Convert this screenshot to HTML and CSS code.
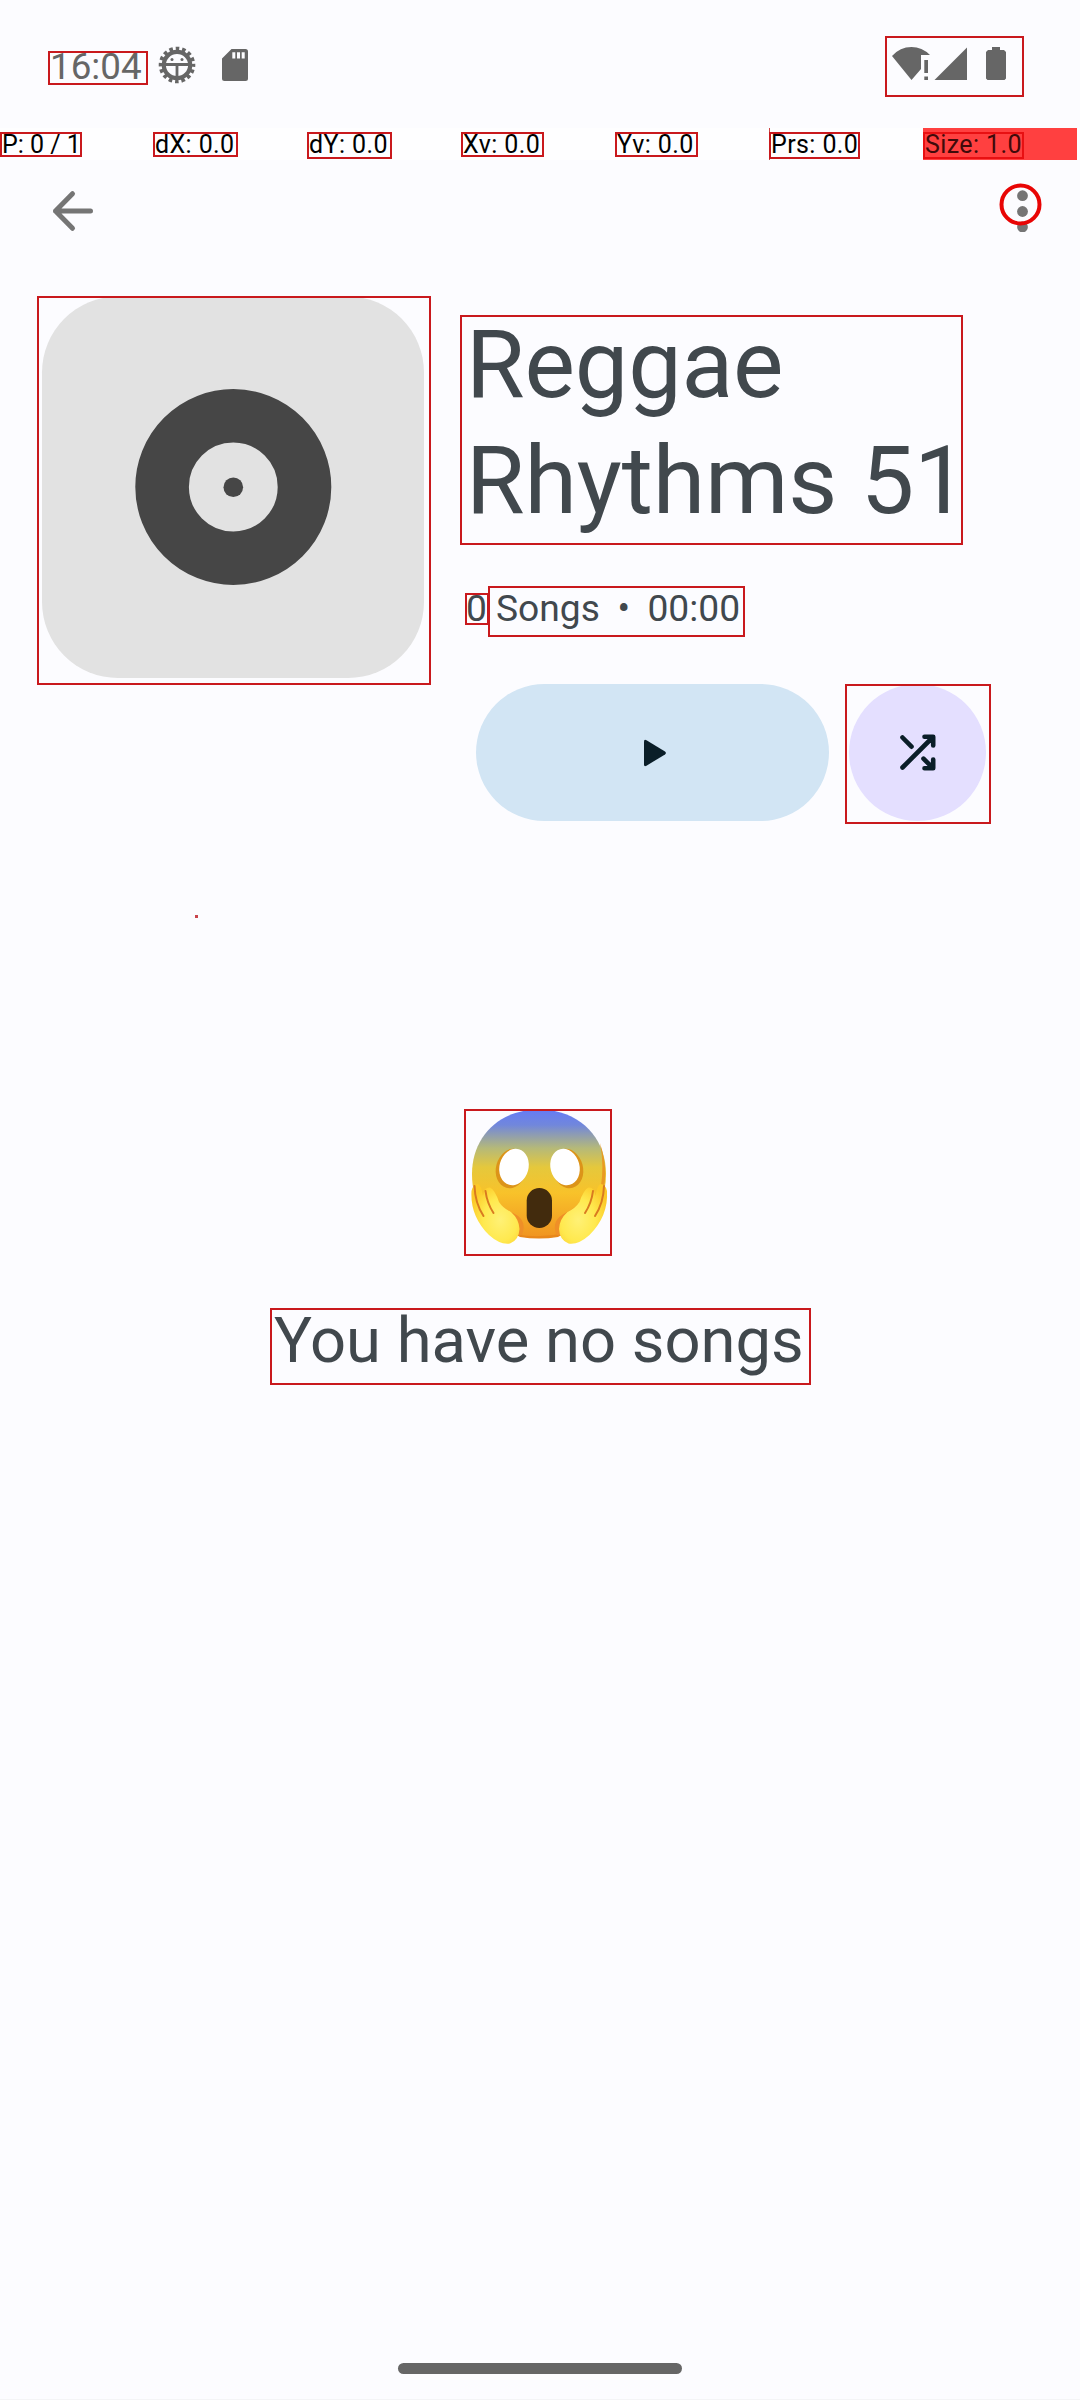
FILE: index.html
```html
<!DOCTYPE html>
<html lang="en">
<head>
<meta charset="utf-8">
<title>Reggae Rhythms 51</title>
<link rel="stylesheet" href="styles.css">
</head>
<body>
<div class="screen">
  <header class="status">
    <div class="mark clock">16:04</div>
    <svg class="gear" width="38" height="38" viewBox="0 0 38 38">
      <circle cx="19" cy="19" r="16" fill="none" stroke="#666" stroke-width="4.600" stroke-dasharray="3.500 2.783" stroke-dashoffset="1.750"/>
      <circle cx="19" cy="19" r="13.200" fill="none" stroke="#666" stroke-width="4.200"/>
      <path d="M5 18.500H33M19 18.500V34" stroke="#666" stroke-width="2.800"/>
      <circle cx="14" cy="13.500" r="1.500" fill="#666"/><circle cx="24" cy="13.500" r="1.500" fill="#666"/>
    </svg>
    <svg class="sd" width="26" height="32" viewBox="0 0 26 32">
      <path fill="#666" fill-rule="evenodd" d="M9.500 0H23.500Q26 0 26 2.500V29.500Q26 32 23.500 32H2.500Q0 32 0 29.500V9.500ZM10.300 3.200V9.600H13.300V3.200ZM15 3.200V9.600H18V3.200ZM19.700 3.200V9.600H22.700V3.200Z"/>
    </svg>
    <div class="mark signals">
      <svg width="135" height="57" viewBox="0 0 135 57">
        <g fill="#666">
          <path d="M5 18Q13 9 24.500 9Q35 9 43 17H34V31L24.500 42Z"/>
          <path d="M37.300 22H41V35H37.300ZM37.300 38.500H41V42H37.300Z"/>
          <path d="M47.500 42 80 9.500V42Z"/>
          <path d="M105 9H113V12H117L119 14V40.500L117.500 42H100.500L99 40.500V14L101 12H105Z"/>
        </g>
      </svg>
    </div>
  </header>
  <div class="pointer">
    <div class="cell first"><span class="mark w-p">P: 0 / 1</span></div>
    <div class="cell"><span class="mark w-dx">dX: 0.0</span></div>
    <div class="cell"><span class="mark w-dy tall">dY: 0.0</span></div>
    <div class="cell"><span class="mark w-v">Xv: 0.0</span></div>
    <div class="cell"><span class="mark w-v">Yv: 0.0</span></div>
    <div class="cell line"><span class="mark w-prs tall">Prs: 0.0</span></div>
    <div class="cell full"><span class="mark w-size tall">Size: 1.0</span></div>
  </div>
  <nav class="toolbar">
    <svg width="42" height="42" viewBox="0 0 42 42"><path d="M39.500 21H4.500M21.500 3.700 4.500 21 21.500 38.300" fill="none" stroke="#757575" stroke-width="5" stroke-linecap="round" stroke-linejoin="round"/></svg>
    <svg width="44" height="54" viewBox="0 0 44 54">
      <g fill="#757575"><circle cx="23.500" cy="17.700" r="5.400"/><circle cx="23.500" cy="33.500" r="5.400"/><circle cx="23.500" cy="49" r="5.400"/></g>
      <circle cx="21.500" cy="26.500" r="19" fill="none" stroke="#e80505" stroke-width="4"/>
    </svg>
  </nav>
  <section class="album">
    <div class="mark cover">
      <svg width="390" height="385" viewBox="39 298 390 385">
        <rect x="42" y="296.500" width="382" height="381.500" rx="76" fill="#e2e2e2"/>
        <circle cx="233.300" cy="487" r="71.200" fill="none" stroke="#464646" stroke-width="53.600"/>
        <circle cx="233.300" cy="487.300" r="9.800" fill="#464646"/>
      </svg>
    </div>
    <div class="info">
      <div class="mark title"><h1>Reggae<br>Rhythms 51</h1></div>
      <div class="meta"><span class="mark count">0</span><span class="mark detail"><span>Songs</span><span>•</span><span>00:00</span></span></div>
      <div class="actions">
        <button class="play" aria-label="Play"><svg width="24" height="28" viewBox="0 0 24 28"><path d="M1 2.500Q1 0 3.500 1.300L22 12.600Q23.800 14 22 15.400L3.500 26.700Q1 28 1 25.500Z" fill="#0a1e28"/></svg></button>
        <button class="mark shuffle" aria-label="Shuffle"><svg width="142" height="136" viewBox="847 686 142 136">
          <ellipse cx="917.500" cy="752.500" rx="68.500" ry="68.500" fill="#e4dfff"/>
          <path d="M902.500 767.500 932 738M902.500 737.500 911.500 746.700M923.500 758.700 932 767.200M924.500 736.800H933.200V745.500M924.500 768.200H933.200V759.500" fill="none" stroke="#0a1e28" stroke-width="4.600" stroke-linecap="round" stroke-linejoin="round"/>
        </svg></button>
      </div>
    </div>
  </section>
  <div class="speck"></div>
  <main class="empty">
    <div class="mark emoji">
      <svg width="144" height="143" viewBox="466 1111 144 143">
        <defs>
          <linearGradient id="face" x1="0" y1="0" x2="0" y2="1"><stop offset="0" stop-color="#657bf5"/><stop offset=".12" stop-color="#7187dc"/><stop offset=".3" stop-color="#b5b979"/><stop offset=".45" stop-color="#e5c83c"/><stop offset=".65" stop-color="#f8c22a"/><stop offset="1" stop-color="#f09321"/></linearGradient>
          <radialGradient id="hand" cx=".6" cy=".6" r=".65"><stop offset="0" stop-color="#fff176"/><stop offset=".55" stop-color="#ffe94f"/><stop offset="1" stop-color="#fcc928"/></radialGradient>
        </defs>
        <path d="M539 1109.500C580 1109.500 606 1138 606 1174C606 1214 580 1238 539 1238C498 1238 472 1214 472 1174C472 1138 498 1109.500 539 1109.500Z" fill="url(#face)"/>
        <path d="M600 1143Q612 1180 597 1205Q606 1172 600 1143Z" fill="#e99a22"/>
        <path d="M515 1234Q539 1239 565 1233L558 1237Q539 1240 520 1237Z" fill="#e8871b"/>
        <ellipse cx="511.500" cy="1168.500" rx="15.500" ry="20" transform="rotate(15 511.500 1168.500)" fill="#dc9419"/>
        <ellipse cx="567.500" cy="1168.500" rx="15.500" ry="20" transform="rotate(-15 567.500 1168.500)" fill="#dc9419"/>
        <ellipse cx="514" cy="1167" rx="14.500" ry="18.500" transform="rotate(15 514 1167)" fill="#fff"/>
        <ellipse cx="565" cy="1167" rx="14.500" ry="18.500" transform="rotate(-15 565 1167)" fill="#fff"/>
        <rect x="526.700" y="1188" width="25.300" height="40" rx="12.600" fill="#422b0d"/>
        <g id="palm">
          <path d="M493 1196Q502 1208 513 1213Q528 1220 522 1235L510 1236Z" fill="#ef8f27"/>
          <path d="M471.500 1191Q473 1184 478 1184Q481 1185 483 1196Q484 1187 490 1187.500Q495 1190 499 1202Q503 1208 511 1212Q519 1219 519.500 1229Q519 1240 510 1243.500Q500 1245 489 1235Q470 1216 471.500 1191Z" fill="url(#hand)"/>
          <path d="M474.500 1186Q475 1203 483.500 1216M485.500 1191Q487 1203 493.500 1213" fill="none" stroke="#d97a20" stroke-width="2" stroke-linecap="round"/>
        </g>
        <use href="#palm" transform="matrix(-1 0 0 1 1078.500 0)"/>
      </svg>
    </div>
    <p class="mark message">You have no songs</p>
  </main>
  <footer class="gesture"><div class="pill"></div></footer>
</div>
</body>
</html>
```
FILE: styles.css
```css
* { box-sizing: border-box; }
body { margin: 0; background: #fcfcff; color: #41484d; font-family: Roboto, sans-serif; }
svg { display: block; flex: none; }
.screen { width: 1080px; height: 2400px; display: flex; flex-direction: column; }
.mark { display: block; flex: none; border: 2px solid #c9191d; white-space: nowrap; }

.status { height: 128px; flex: none; display: flex; align-items: flex-start; padding-left: 48px; }
.clock { width: 100px; height: 34px; margin-top: 51px; font-size: 36.800px; line-height: 28px; color: #666; }
.gear { margin: 46px 0 0 10px; }
.sd { margin: 49px 0 0 26px; }
.signals { width: 139px; height: 61px; margin: 36px 0 0 637px; }

.pointer { height: 32px; flex: none; display: flex; background: #fefeff; color: #000; }
.cell { width: 154px; flex: none; padding-top: 4px; letter-spacing: .4px; }
.first { width: 153px; letter-spacing: 0; }
.cell .mark { height: 25px; font-size: 25px; line-height: 21px; }
.cell .tall { height: 27px; }
.w-p { width: 82px; }
.w-dx, .w-dy { width: 85px; }
.w-v { width: 83px; }
.w-prs { width: 91px; }
.w-size { width: 101px; }
.line { box-shadow: inset 1px 0 #c44; }
.full { background: #ff4040; color: #400a0a; }
.full .mark { border-color: #e81012; }

.toolbar { height: 136px; flex: none; display: flex; justify-content: space-between; align-items: flex-start; padding: 18px 37px 0 51px; }
.toolbar svg:first-child { margin-top: 12px; }

.album { height: 530px; flex: none; display: flex; align-items: flex-start; gap: 29px; padding-left: 37px; }
.cover { width: 394px; height: 389px; }
.cover svg { overflow: hidden; }
.info { display: flex; flex-direction: column; padding-top: 19px; }
.title { width: 503px; height: 230px; padding-left: 4px; }
.title h1 { margin: -10.500px 0 0; font-size: 95.200px; line-height: 116px; font-weight: 400; letter-spacing: -.15px; }
.meta { display: flex; align-items: flex-start; margin: 41px 0 0 5px; font-size: 37.200px; }
.count { width: 24px; height: 32px; margin-top: 7px; line-height: 27px; text-indent: -1px; }
.detail { display: flex; gap: 17.500px; width: 257px; height: 51px; margin-left: -1px; padding-left: 6px; line-height: 41px; }
.actions { display: flex; gap: 16px; margin: 47px 0 0 16px; }
.play { display: flex; align-items: center; justify-content: center; width: 353px; height: 137px; padding: 0 0 0 4px; border: 0; border-radius: 69px; background: #d2e5f4; }
.shuffle { width: 146px; height: 140px; padding: 0; background: none; }

.speck { width: 3px; height: 3px; flex: none; margin: 89px 0 0 195px; background: #c9444c; }

.empty { display: flex; flex-direction: column; align-items: center; padding-top: 191px; }
.emoji { width: 148px; height: 147px; margin-right: 4px; }
.message { width: 541px; height: 77px; margin: 52px 0 0 1px; padding-left: 2px; font-size: 63.300px; line-height: 61px; }

.gesture { margin-top: auto; height: 37px; flex: none; display: flex; justify-content: center; border-bottom: 1px solid #f4f4f6; }
.pill { width: 284px; height: 11px; border-radius: 6px; background: #666; }
```
